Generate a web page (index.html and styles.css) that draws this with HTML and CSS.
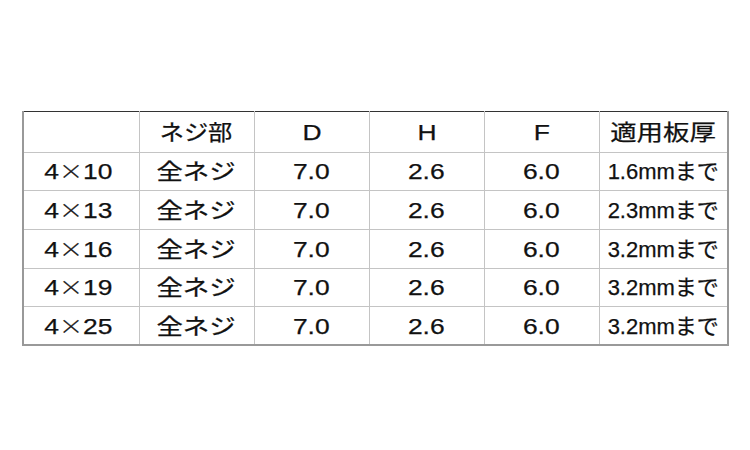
FILE: index.html
```html
<!DOCTYPE html>
<html lang="ja">
<head>
<meta charset="utf-8">
<link rel="stylesheet" href="styles.css">
</head>
<body>
<table class="spec">
  <colgroup>
    <col class="c1"><col class="c2"><col class="c3"><col class="c4"><col class="c5"><col class="c6">
  </colgroup>
  <tr class="head">
    <td></td><td><span class="t narrow">ネジ部</span></td><td><span class="t">D</span></td><td><span class="t">H</span></td><td><span class="t">F</span></td><td><span class="t">適用板厚</span></td>
  </tr>
  <tr><td class="size"><span class="t">4<span class="x">×</span>10</span></td><td><span class="t">全ネジ</span></td><td><span class="t">7.0</span></td><td><span class="t">2.6</span></td><td><span class="t">6.0</span></td><td><span class="t plain">1.6mmまで</span></td></tr>
  <tr><td class="size"><span class="t">4<span class="x">×</span>13</span></td><td><span class="t">全ネジ</span></td><td><span class="t">7.0</span></td><td><span class="t">2.6</span></td><td><span class="t">6.0</span></td><td><span class="t plain">2.3mmまで</span></td></tr>
  <tr><td class="size"><span class="t">4<span class="x">×</span>16</span></td><td><span class="t">全ネジ</span></td><td><span class="t">7.0</span></td><td><span class="t">2.6</span></td><td><span class="t">6.0</span></td><td><span class="t plain">3.2mmまで</span></td></tr>
  <tr><td class="size"><span class="t">4<span class="x">×</span>19</span></td><td><span class="t">全ネジ</span></td><td><span class="t">7.0</span></td><td><span class="t">2.6</span></td><td><span class="t">6.0</span></td><td><span class="t plain">3.2mmまで</span></td></tr>
  <tr><td class="size"><span class="t">4<span class="x">×</span>25</span></td><td><span class="t">全ネジ</span></td><td><span class="t">7.0</span></td><td><span class="t">2.6</span></td><td><span class="t">6.0</span></td><td><span class="t plain">3.2mmまで</span></td></tr>
</table>
</body>
</html>
```

FILE: styles.css
```css
html, body {
  margin: 0;
  padding: 0;
  background: #ffffff;
}
body {
  padding: 111px 0 0 22px;
  font-family: "Liberation Sans", "Noto Sans CJK JP", sans-serif;
  color: #111;
}
.spec {
  border-collapse: collapse;
  table-layout: fixed;
  width: 705px;
  border-top: 1px solid #333;
  border-left: 2px solid #999;
  border-right: 2px solid #999;
  border-bottom: 2px solid #999;
}
.c1 { width: 116px; }
.c2 { width: 115px; }
.c3 { width: 115px; }
.c4 { width: 115px; }
.c5 { width: 115px; }
.c6 { width: 129px; }
.spec td {
  height: 38.7px;
  padding: 2px 0 0 0;
  box-sizing: border-box;
  border: 1px solid #c4c4c4;
  text-align: center;
  vertical-align: middle;
  font-size: 22px;
  line-height: 26px;
  white-space: nowrap;
}
.spec td.size { padding-right: 6px; }
.spec tr:first-child td { border-top: 1px solid #333; }
.spec tr:last-child td { border-bottom: 2px solid #999; }
.spec td:first-child { border-left: 2px solid #999; }
.spec td:last-child { border-right: 2px solid #999; }
.spec tr.head td { height: 40.5px; }
.t {
  display: inline-block;
  transform: scaleX(1.2);
  -webkit-text-stroke: 0.25px #111;
}
.t.narrow { transform: scaleX(1.1); }
.t.plain { transform: none; }
.x {
  font-family: "Noto Sans CJK JP", sans-serif;
  font-weight: 300;
  line-height: 0;
  font-size: 20px;
}
```
